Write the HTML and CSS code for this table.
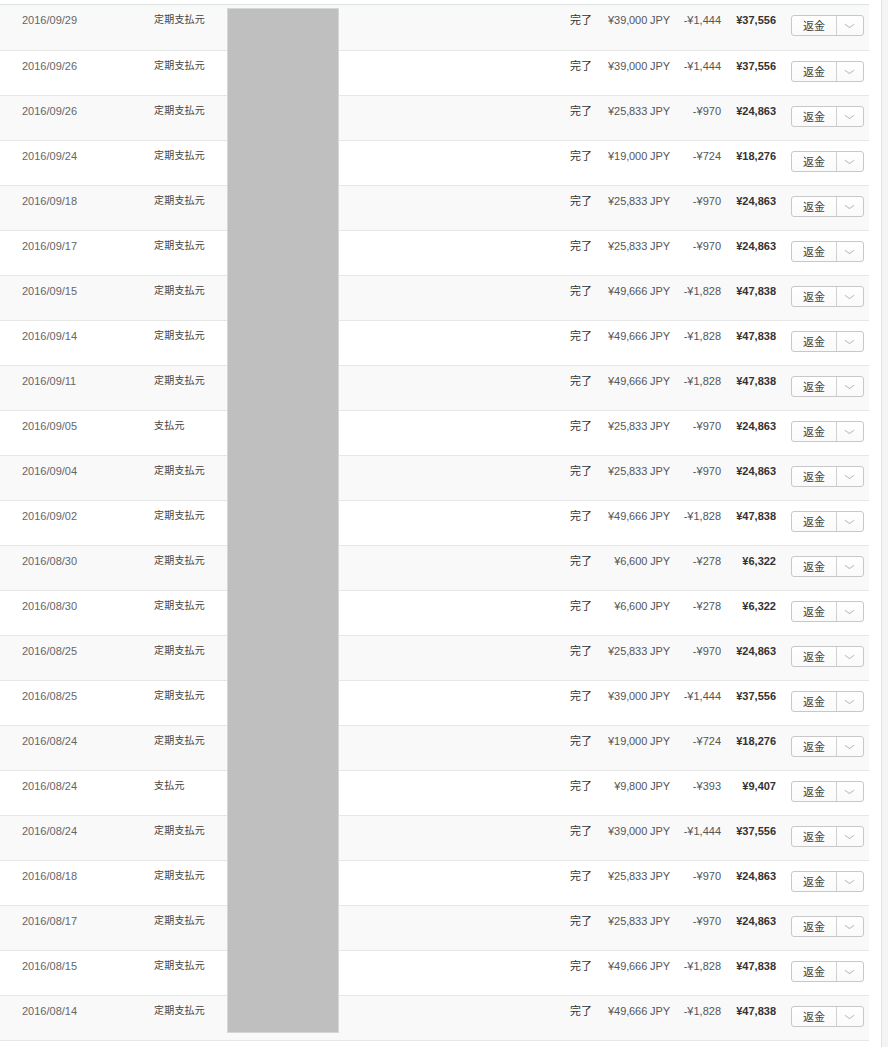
FILE: index.html
```html
<!DOCTYPE html>
<html lang="ja">
<head>
    <meta charset="UTF-8">
    <title>取引履歴</title>
    <link rel="stylesheet" href="styles.css">
</head>
<body>
    <div class="page">
        <!-- Transaction list -->
        <div class="history">
            <div class="history-top"></div>
            <table class="tx-table">
                <colgroup>
                    <col class="w-date">
                    <col class="w-type">
                    <col class="w-desc">
                    <col class="w-status">
                    <col class="w-gross">
                    <col class="w-fee">
                    <col class="w-net">
                    <col class="w-action">
                </colgroup>
                <tbody>
                    <tr><td class="date">2016/09/29</td><td class="type">定期支払元</td><td></td><td class="status">完了</td><td class="gross">¥39,000 JPY</td><td class="fee">-¥1,444</td><td class="net">¥37,556</td><td class="action"><div class="split-btn"><span class="btn-main">返金</span><span class="btn-arrow"></span></div></td></tr>
                    <tr><td class="date">2016/09/26</td><td class="type">定期支払元</td><td></td><td class="status">完了</td><td class="gross">¥39,000 JPY</td><td class="fee">-¥1,444</td><td class="net">¥37,556</td><td class="action"><div class="split-btn"><span class="btn-main">返金</span><span class="btn-arrow"></span></div></td></tr>
                    <tr><td class="date">2016/09/26</td><td class="type">定期支払元</td><td></td><td class="status">完了</td><td class="gross">¥25,833 JPY</td><td class="fee">-¥970</td><td class="net">¥24,863</td><td class="action"><div class="split-btn"><span class="btn-main">返金</span><span class="btn-arrow"></span></div></td></tr>
                    <tr><td class="date">2016/09/24</td><td class="type">定期支払元</td><td></td><td class="status">完了</td><td class="gross">¥19,000 JPY</td><td class="fee">-¥724</td><td class="net">¥18,276</td><td class="action"><div class="split-btn"><span class="btn-main">返金</span><span class="btn-arrow"></span></div></td></tr>
                    <tr><td class="date">2016/09/18</td><td class="type">定期支払元</td><td></td><td class="status">完了</td><td class="gross">¥25,833 JPY</td><td class="fee">-¥970</td><td class="net">¥24,863</td><td class="action"><div class="split-btn"><span class="btn-main">返金</span><span class="btn-arrow"></span></div></td></tr>
                    <tr><td class="date">2016/09/17</td><td class="type">定期支払元</td><td></td><td class="status">完了</td><td class="gross">¥25,833 JPY</td><td class="fee">-¥970</td><td class="net">¥24,863</td><td class="action"><div class="split-btn"><span class="btn-main">返金</span><span class="btn-arrow"></span></div></td></tr>
                    <tr><td class="date">2016/09/15</td><td class="type">定期支払元</td><td></td><td class="status">完了</td><td class="gross">¥49,666 JPY</td><td class="fee">-¥1,828</td><td class="net">¥47,838</td><td class="action"><div class="split-btn"><span class="btn-main">返金</span><span class="btn-arrow"></span></div></td></tr>
                    <tr><td class="date">2016/09/14</td><td class="type">定期支払元</td><td></td><td class="status">完了</td><td class="gross">¥49,666 JPY</td><td class="fee">-¥1,828</td><td class="net">¥47,838</td><td class="action"><div class="split-btn"><span class="btn-main">返金</span><span class="btn-arrow"></span></div></td></tr>
                    <tr><td class="date">2016/09/11</td><td class="type">定期支払元</td><td></td><td class="status">完了</td><td class="gross">¥49,666 JPY</td><td class="fee">-¥1,828</td><td class="net">¥47,838</td><td class="action"><div class="split-btn"><span class="btn-main">返金</span><span class="btn-arrow"></span></div></td></tr>
                    <tr><td class="date">2016/09/05</td><td class="type">支払元</td><td></td><td class="status">完了</td><td class="gross">¥25,833 JPY</td><td class="fee">-¥970</td><td class="net">¥24,863</td><td class="action"><div class="split-btn"><span class="btn-main">返金</span><span class="btn-arrow"></span></div></td></tr>
                    <tr><td class="date">2016/09/04</td><td class="type">定期支払元</td><td></td><td class="status">完了</td><td class="gross">¥25,833 JPY</td><td class="fee">-¥970</td><td class="net">¥24,863</td><td class="action"><div class="split-btn"><span class="btn-main">返金</span><span class="btn-arrow"></span></div></td></tr>
                    <tr><td class="date">2016/09/02</td><td class="type">定期支払元</td><td></td><td class="status">完了</td><td class="gross">¥49,666 JPY</td><td class="fee">-¥1,828</td><td class="net">¥47,838</td><td class="action"><div class="split-btn"><span class="btn-main">返金</span><span class="btn-arrow"></span></div></td></tr>
                    <tr><td class="date">2016/08/30</td><td class="type">定期支払元</td><td></td><td class="status">完了</td><td class="gross">¥6,600 JPY</td><td class="fee">-¥278</td><td class="net">¥6,322</td><td class="action"><div class="split-btn"><span class="btn-main">返金</span><span class="btn-arrow"></span></div></td></tr>
                    <tr><td class="date">2016/08/30</td><td class="type">定期支払元</td><td></td><td class="status">完了</td><td class="gross">¥6,600 JPY</td><td class="fee">-¥278</td><td class="net">¥6,322</td><td class="action"><div class="split-btn"><span class="btn-main">返金</span><span class="btn-arrow"></span></div></td></tr>
                    <tr><td class="date">2016/08/25</td><td class="type">定期支払元</td><td></td><td class="status">完了</td><td class="gross">¥25,833 JPY</td><td class="fee">-¥970</td><td class="net">¥24,863</td><td class="action"><div class="split-btn"><span class="btn-main">返金</span><span class="btn-arrow"></span></div></td></tr>
                    <tr><td class="date">2016/08/25</td><td class="type">定期支払元</td><td></td><td class="status">完了</td><td class="gross">¥39,000 JPY</td><td class="fee">-¥1,444</td><td class="net">¥37,556</td><td class="action"><div class="split-btn"><span class="btn-main">返金</span><span class="btn-arrow"></span></div></td></tr>
                    <tr><td class="date">2016/08/24</td><td class="type">定期支払元</td><td></td><td class="status">完了</td><td class="gross">¥19,000 JPY</td><td class="fee">-¥724</td><td class="net">¥18,276</td><td class="action"><div class="split-btn"><span class="btn-main">返金</span><span class="btn-arrow"></span></div></td></tr>
                    <tr><td class="date">2016/08/24</td><td class="type">支払元</td><td></td><td class="status">完了</td><td class="gross">¥9,800 JPY</td><td class="fee">-¥393</td><td class="net">¥9,407</td><td class="action"><div class="split-btn"><span class="btn-main">返金</span><span class="btn-arrow"></span></div></td></tr>
                    <tr><td class="date">2016/08/24</td><td class="type">定期支払元</td><td></td><td class="status">完了</td><td class="gross">¥39,000 JPY</td><td class="fee">-¥1,444</td><td class="net">¥37,556</td><td class="action"><div class="split-btn"><span class="btn-main">返金</span><span class="btn-arrow"></span></div></td></tr>
                    <tr><td class="date">2016/08/18</td><td class="type">定期支払元</td><td></td><td class="status">完了</td><td class="gross">¥25,833 JPY</td><td class="fee">-¥970</td><td class="net">¥24,863</td><td class="action"><div class="split-btn"><span class="btn-main">返金</span><span class="btn-arrow"></span></div></td></tr>
                    <tr><td class="date">2016/08/17</td><td class="type">定期支払元</td><td></td><td class="status">完了</td><td class="gross">¥25,833 JPY</td><td class="fee">-¥970</td><td class="net">¥24,863</td><td class="action"><div class="split-btn"><span class="btn-main">返金</span><span class="btn-arrow"></span></div></td></tr>
                    <tr><td class="date">2016/08/15</td><td class="type">定期支払元</td><td></td><td class="status">完了</td><td class="gross">¥49,666 JPY</td><td class="fee">-¥1,828</td><td class="net">¥47,838</td><td class="action"><div class="split-btn"><span class="btn-main">返金</span><span class="btn-arrow"></span></div></td></tr>
                    <tr><td class="date">2016/08/14</td><td class="type">定期支払元</td><td></td><td class="status">完了</td><td class="gross">¥49,666 JPY</td><td class="fee">-¥1,828</td><td class="net">¥47,838</td><td class="action"><div class="split-btn"><span class="btn-main">返金</span><span class="btn-arrow"></span></div></td></tr>
                </tbody>
            </table>

            <!-- Redacted column -->
            <div class="redacted"></div>
        </div>

        <!-- Right gutter -->
        <div class="gutter"></div>
        <div class="side-track"></div>
    </div>
</body>
</html>
```

FILE: styles.css
```css
/* Reset */
* {
    margin: 0;
    padding: 0;
    box-sizing: border-box;
}

body {
    font-family: "Liberation Sans", Arial, "Noto Sans CJK JP", sans-serif;
    font-size: 11px;
    color: #555;
    background-color: #fff;
}

.page {
    display: flex;
    min-height: 1047px;
}

/* Transaction list */
.history {
    position: relative;
    width: 869px;
    flex-shrink: 0;
}

.history-top {
    height: 5px;
    border-bottom: 1px solid #d9e3e0;
}

.tx-table {
    width: 869px;
    table-layout: fixed;
    border-collapse: collapse;
}

.w-date { width: 154px; }
.w-type { width: 74px; }
.w-desc { width: 332px; }
.w-status { width: 40px; }
.w-gross { width: 77px; }
.w-fee { width: 52px; }
.w-net { width: 55px; }
.w-action { width: 85px; }

.tx-table tr {
    height: 45px;
    border-bottom: 1px solid #e6e6e6;
}

.tx-table tr:nth-child(odd) {
    background-color: #f9f9f9;
}

.tx-table td {
    vertical-align: top;
    padding-top: 7px;
    line-height: 16px;
    white-space: nowrap;
}

.tx-table .date {
    padding-left: 22px;
    color: #666;
}

.tx-table .type {
    font-size: 10px;
    letter-spacing: 0.2px;
    color: #444;
}

.tx-table .status {
    padding-left: 10px;
    color: #333;
}

.tx-table .gross,
.tx-table .fee,
.tx-table .net {
    text-align: right;
    padding-right: 8px;
}

.tx-table .gross {
    padding-right: 7px;
    letter-spacing: -0.1px;
}

.tx-table .net {
    font-weight: bold;
    color: #333;
}

.tx-table .action {
    padding-left: 7px;
}

/* Refund split button */
.split-btn {
    display: flex;
    width: 73px;
    height: 21px;
    margin-top: 3px;
    border: 1px solid #c8c8c8;
    border-radius: 3px;
    background: linear-gradient(#fff, #fafafa);
}

.btn-main {
    width: 45px;
    border-right: 1px solid #d0d0d0;
    text-align: center;
    line-height: 21px;
    color: #444;
}

.btn-arrow {
    flex: 1;
    position: relative;
}

.btn-arrow::after {
    content: "";
    position: absolute;
    left: 9px;
    top: 5px;
    width: 6px;
    height: 6px;
    border-right: 1px solid #a9b9c9;
    border-bottom: 1px solid #a9b9c9;
    transform: scaleY(0.7) rotate(45deg);
}

/* Redacted column block */
.redacted {
    position: absolute;
    left: 227px;
    top: 8px;
    width: 112px;
    height: 1025px;
    background-color: #bfbfbf;
    border: 1px solid #d6d6d6;
}

/* Right gutter */
.gutter {
    width: 12px;
}

.side-track {
    flex: 1;
    background-color: #f4f4f4;
    border-left: 1px solid #e2e2e2;
}
```
